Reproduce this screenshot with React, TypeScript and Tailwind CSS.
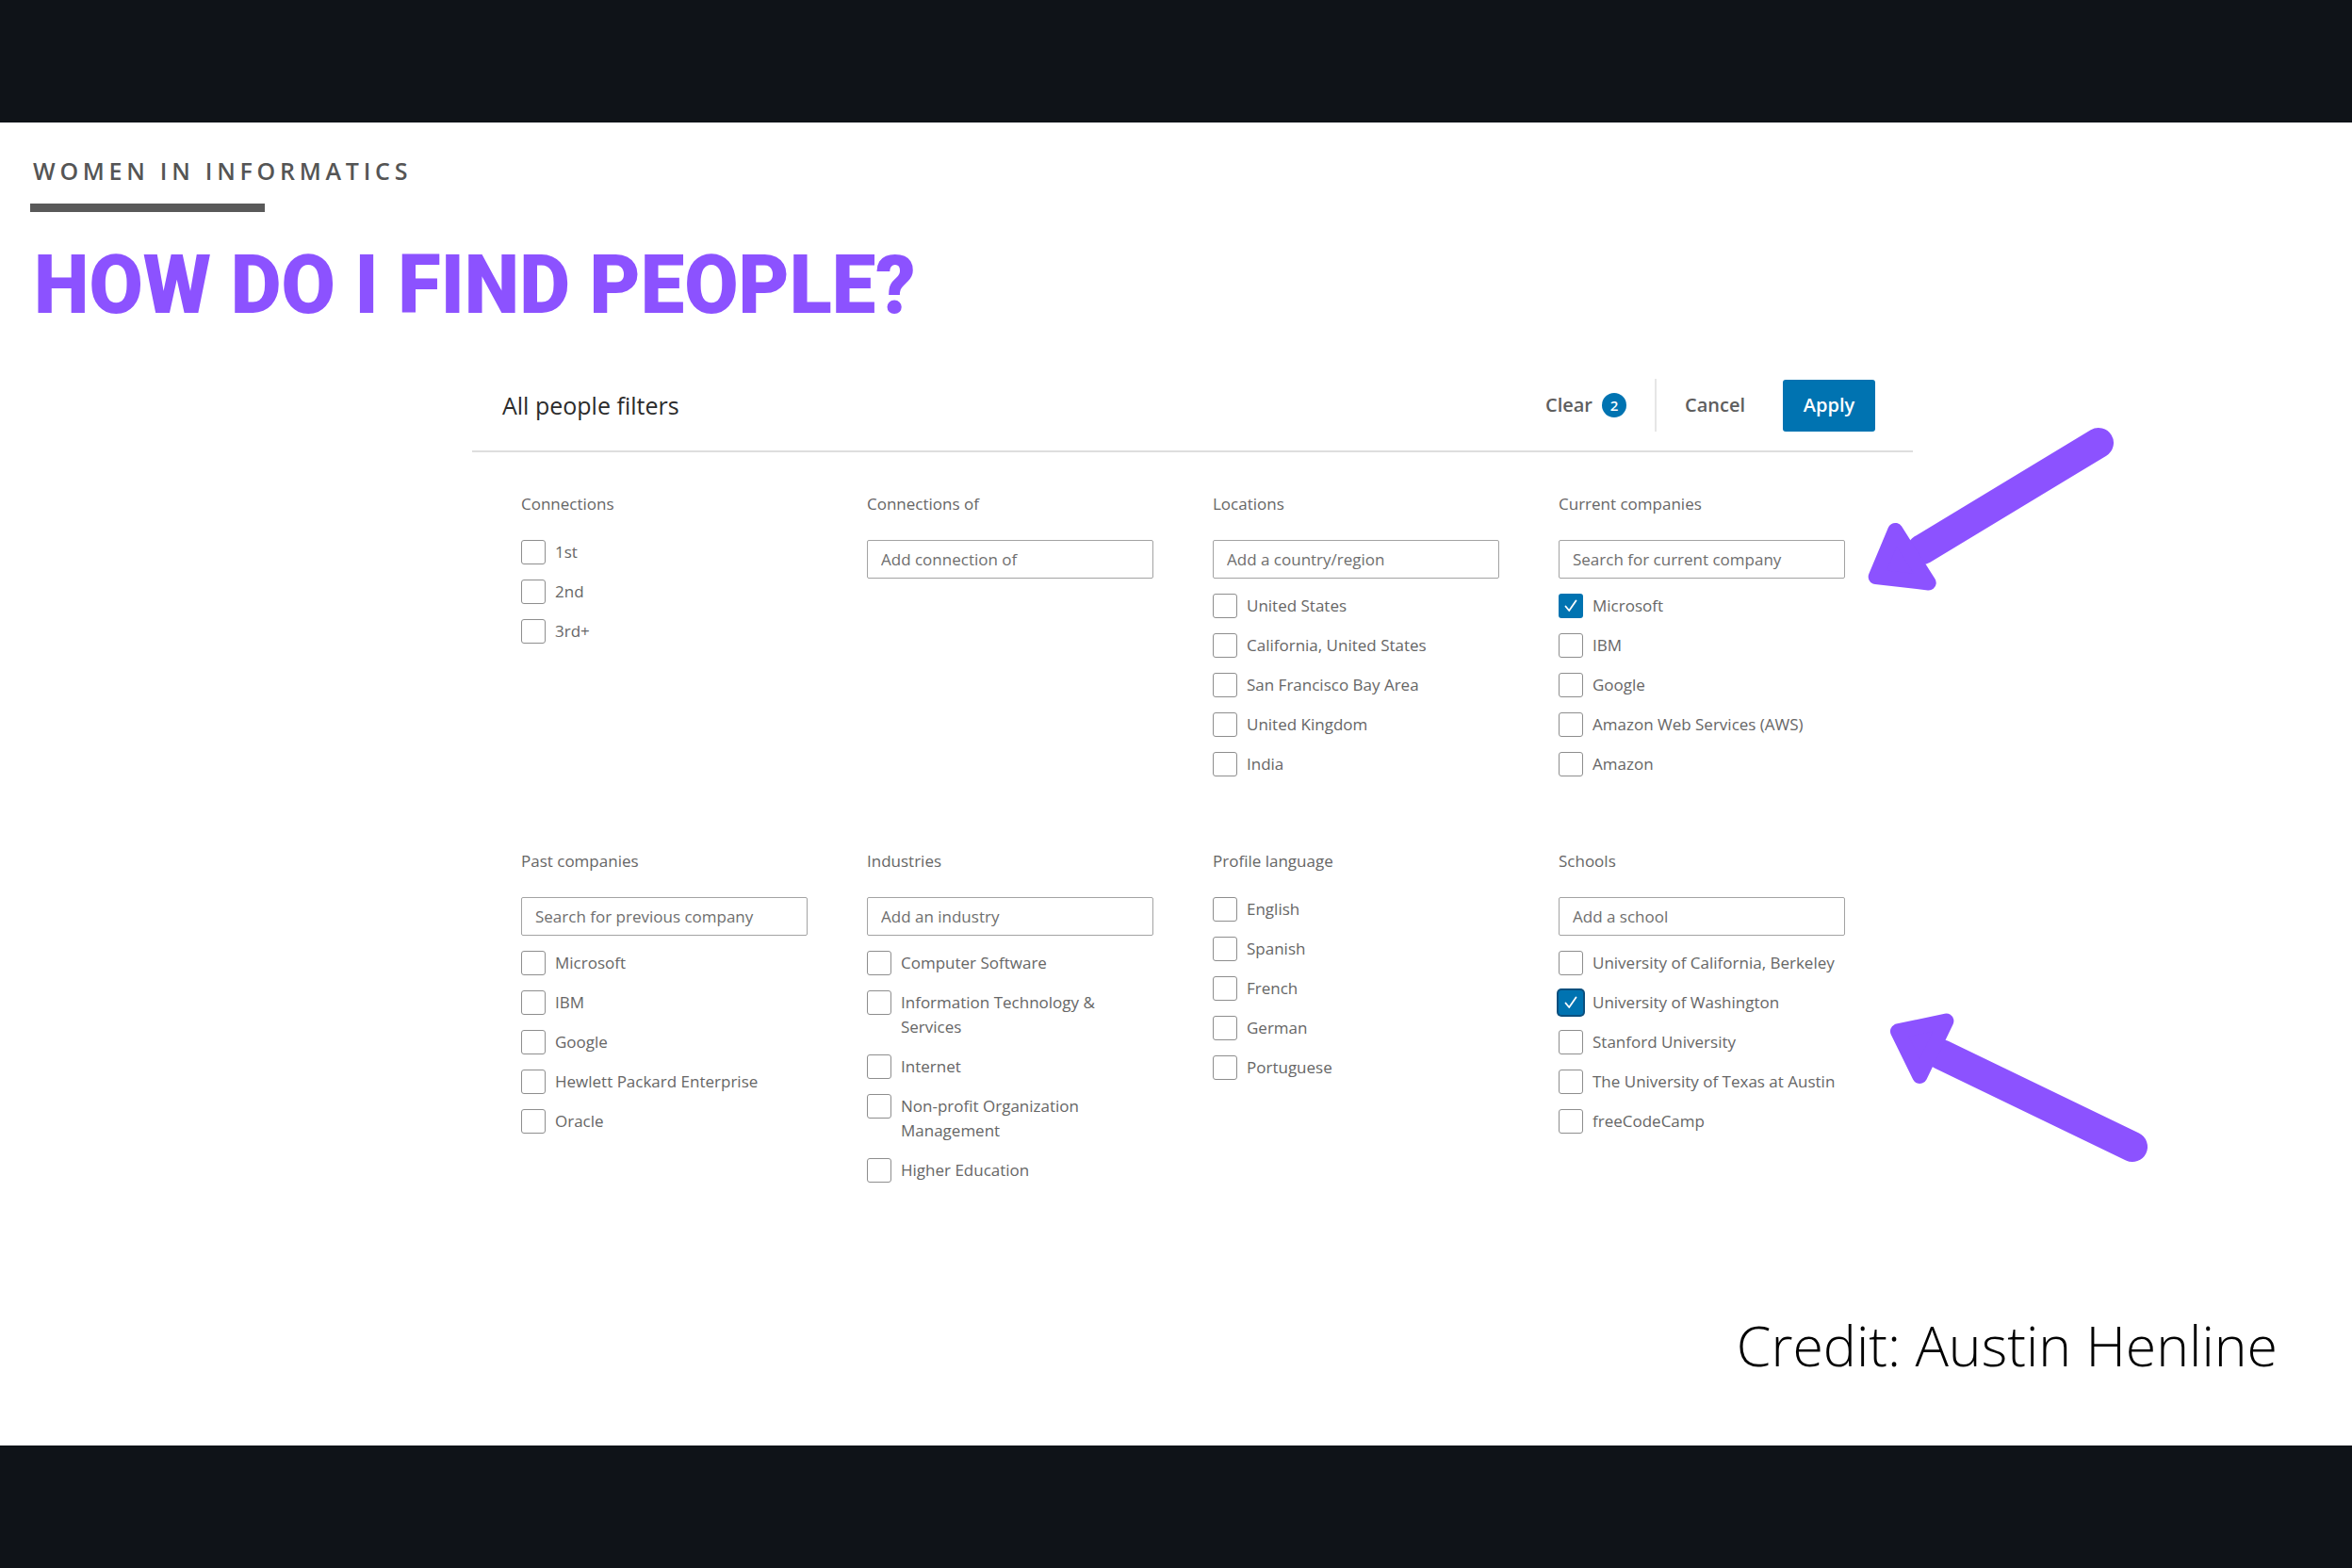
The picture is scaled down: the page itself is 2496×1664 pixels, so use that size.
import React from "react";

type Item = { t: string; checked?: boolean; focus?: boolean };
type Col = { title: string; input?: string; items: Item[] };

const row1: Col[] = [
  { title: "Connections", items: [{ t: "1st" }, { t: "2nd" }, { t: "3rd+" }] },
  { title: "Connections of", input: "Add connection of", items: [] },
  {
    title: "Locations",
    input: "Add a country/region",
    items: [
      { t: "United States" },
      { t: "California, United States" },
      { t: "San Francisco Bay Area" },
      { t: "United Kingdom" },
      { t: "India" },
    ],
  },
  {
    title: "Current companies",
    input: "Search for current company",
    items: [
      { t: "Microsoft", checked: true },
      { t: "IBM" },
      { t: "Google" },
      { t: "Amazon Web Services (AWS)" },
      { t: "Amazon" },
    ],
  },
];

const row2: Col[] = [
  {
    title: "Past companies",
    input: "Search for previous company",
    items: [
      { t: "Microsoft" },
      { t: "IBM" },
      { t: "Google" },
      { t: "Hewlett Packard Enterprise" },
      { t: "Oracle" },
    ],
  },
  {
    title: "Industries",
    input: "Add an industry",
    items: [
      { t: "Computer Software" },
      { t: "Information Technology & Services" },
      { t: "Internet" },
      { t: "Non-profit Organization Management" },
      { t: "Higher Education" },
    ],
  },
  {
    title: "Profile language",
    items: [
      { t: "English" },
      { t: "Spanish" },
      { t: "French" },
      { t: "German" },
      { t: "Portuguese" },
    ],
  },
  {
    title: "Schools",
    input: "Add a school",
    items: [
      { t: "University of California, Berkeley" },
      { t: "University of Washington", checked: true, focus: true },
      { t: "Stanford University" },
      { t: "The University of Texas at Austin" },
      { t: "freeCodeCamp" },
    ],
  },
];

function Checkbox({ checked, focus }: { checked?: boolean; focus?: boolean }) {
  if (checked) {
    return (
      <span
        className={
          "w-[26px] h-[26px] shrink-0 rounded-[3px] bg-[#0073b1] flex items-center justify-center " +
          (focus ? "shadow-[0_0_0_2px_#0b4f7e]" : "")
        }
      >
        <svg width="20" height="20" viewBox="0 0 20 20" fill="none">
          <path d="M4.5 10.5 L8.2 15 L15.5 4.5" stroke="#ffffff" strokeWidth="1.8" strokeLinecap="round" strokeLinejoin="round" />
        </svg>
      </span>
    );
  }
  return <span className="w-[26px] h-[26px] shrink-0 rounded-[3px] border-[1.5px] border-[#8e8e8e] bg-white" />;
}

function Column({ col }: { col: Col }) {
  return (
    <div className="flex flex-col">
      <div className="text-[17px] leading-[24px] text-[#666666]">{col.title}</div>
      {col.input && (
        <input
          readOnly
          placeholder={col.input}
          className="mt-[26px] h-[41px] w-[304px] border border-[#a3a3a3] rounded-[2px] pl-[14px] text-[17px] text-[#666666] placeholder:text-[#6e6e6e] outline-none bg-white font-['Open_Sans',sans-serif]"
        />
      )}
      {col.items.length > 0 && (
        <div className={"flex flex-col gap-[16px] " + (col.input ? "mt-[16px]" : "mt-[26px]")}>
          {col.items.map((it) => (
            <div key={it.t} className="flex items-start gap-[10px]">
              <Checkbox checked={it.checked} focus={it.focus} />
              <span className="w-[268px] text-[17px] leading-[26px] text-[#666666]">{it.t}</span>
            </div>
          ))}
        </div>
      )}
    </div>
  );
}

export default function App() {
  return (
    <div className="relative w-[2496px] h-[1664px] overflow-hidden bg-white flex flex-col font-['Open_Sans',sans-serif]">
      <div className="h-[130px] shrink-0 bg-[#0f1318]" />
      <main className="flex-1 flex flex-col">
        <div className="pl-[35px] pt-[39px] text-[25px] leading-[25px] font-semibold tracking-[0.19em] text-[#555555]">
          WOMEN IN INFORMATICS
        </div>
        <div className="ml-[32px] mt-[22px] w-[249px] h-[9px] bg-[#595959]" />
        <h1 className="ml-[36px] mt-[34px] text-[87px] leading-[87px] font-black text-[#8c52ff] font-['Roboto',sans-serif] origin-left scale-x-[0.955] whitespace-nowrap">
          HOW DO I FIND PEOPLE?
        </h1>

        <section className="ml-[501px] mt-[34px] w-[1529px]">
          <div className="h-[100px] border-b-2 border-[#dedede] flex items-center pl-[32px] pr-[40px] pt-[2px]">
            <div className="text-[25px] text-[#2b2b2b] pt-[2px]">All people filters</div>
            <div className="ml-auto flex items-center h-[55px]">
              <div className="flex items-center gap-[10px] text-[20px] font-semibold text-[#5e5e5e]">
                <span>Clear</span>
                <span className="w-[26px] h-[26px] rounded-full bg-[#0073b1] text-white text-[15px] font-semibold flex items-center justify-center leading-none">
                  2
                </span>
              </div>
              <div className="w-[2px] h-[56px] bg-[#e6e6e6] ml-[30px]" />
              <div className="ml-[30px] text-[20px] font-semibold text-[#5e5e5e]">Cancel</div>
              <div className="ml-[40px] w-[98px] h-[55px] rounded-[3px] bg-[#0073b1] text-white text-[20px] font-semibold flex items-center justify-center">
                Apply
              </div>
            </div>
          </div>

          <div className="pl-[52px] pt-[43px] grid grid-cols-[repeat(4,304px)] gap-x-[63px] gap-y-[78px]">
            {row1.map((c) => (
              <Column key={c.title} col={c} />
            ))}
            {row2.map((c) => (
              <Column key={c.title} col={c} />
            ))}
          </div>
        </section>

        <div className="mt-auto mb-[77px] flex justify-end pr-[79px]">
          <div className="text-[59px] leading-[59px] font-light text-black">Credit: Austin Henline</div>
        </div>
      </main>
      <div className="h-[130px] shrink-0 bg-[#0f1318]" />

      <svg
        className="absolute inset-0 pointer-events-none"
        width="2496"
        height="1664"
        viewBox="0 0 2496 1664"
      >
        <g fill="#8c52ff" stroke="#8c52ff" strokeLinejoin="round" strokeLinecap="round">
          <line x1="2227" y1="470" x2="2040" y2="583" strokeWidth="32" />
          <polygon points="2011.3,562.9 1990.7,612.1 2046.7,618.5" strokeWidth="16" />
          <line x1="2263" y1="1217" x2="2060" y2="1119" strokeWidth="32" />
          <polygon points="2014,1094.4 2065.4,1083.5 2037.3,1142" strokeWidth="16" />
        </g>
      </svg>
    </div>
  );
}
